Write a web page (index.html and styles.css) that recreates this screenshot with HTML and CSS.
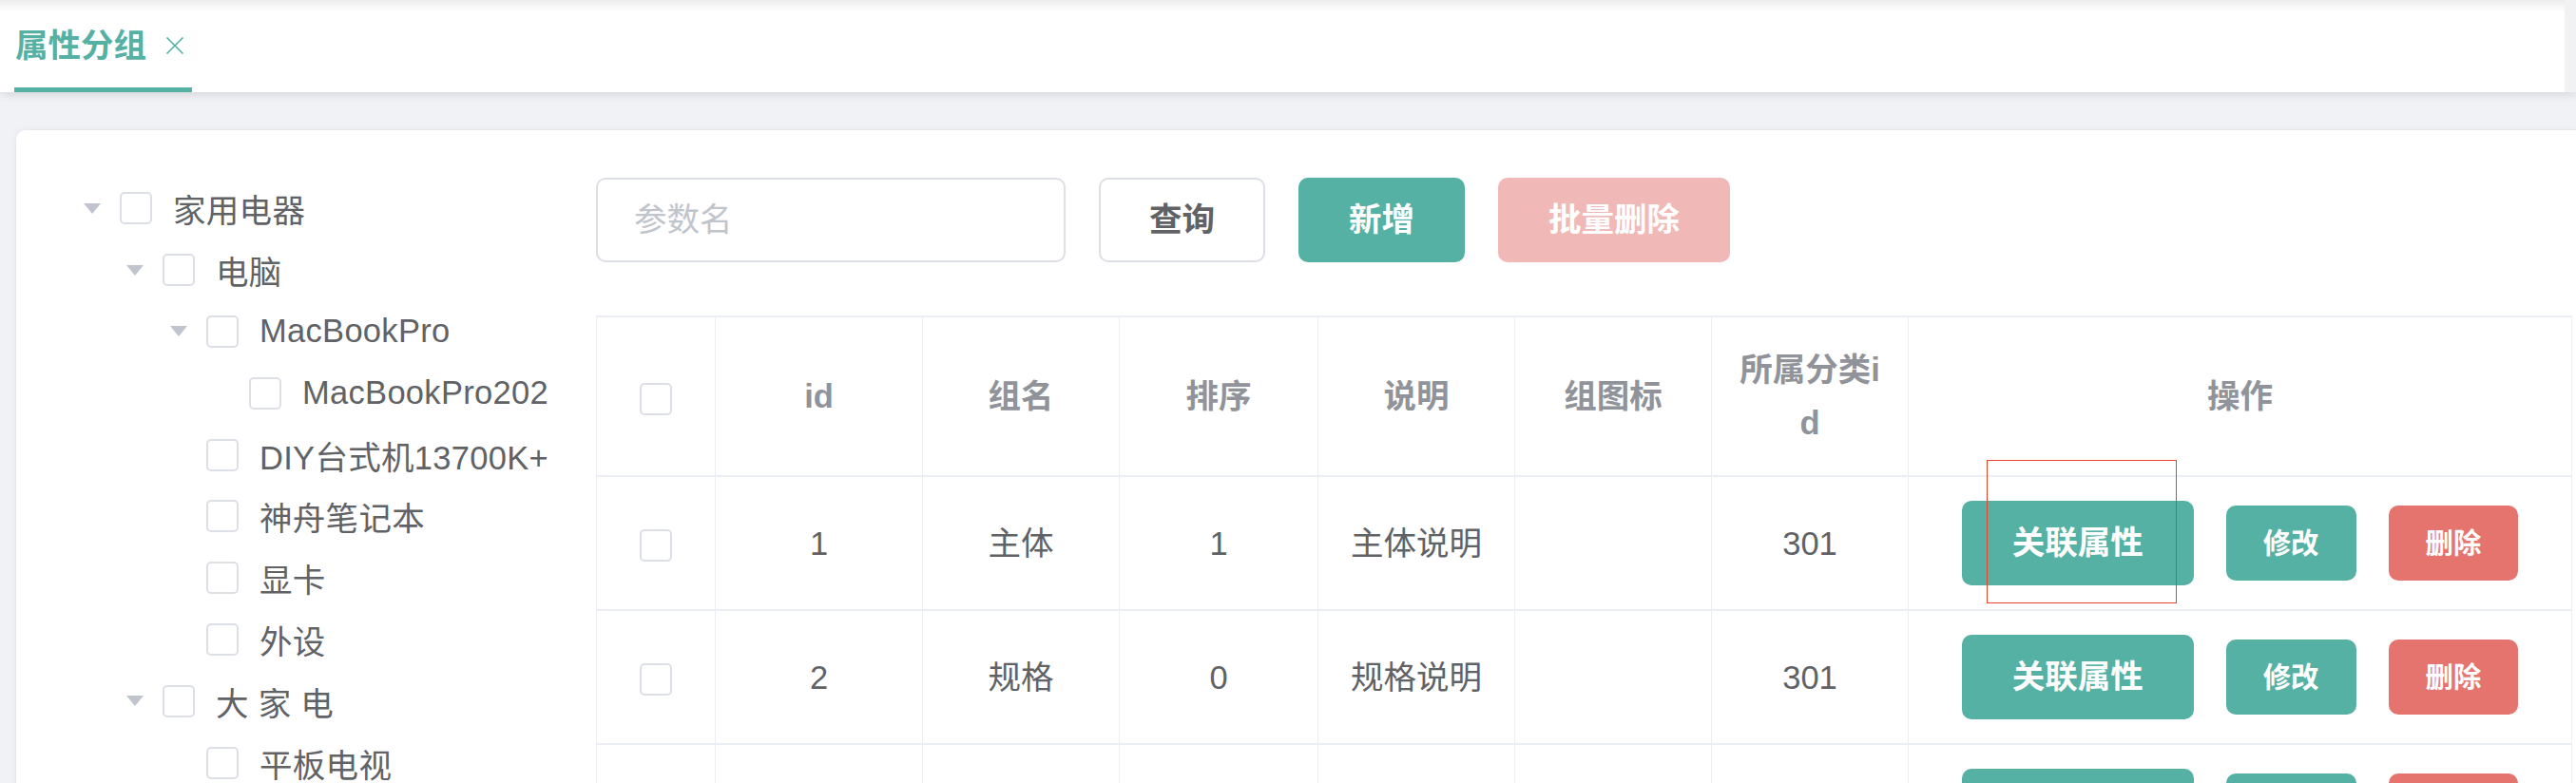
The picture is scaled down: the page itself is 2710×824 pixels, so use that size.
FILE: index.html
```html
<!DOCTYPE html>
<html lang="zh-CN">
<head>
<meta charset="utf-8">
<title>属性分组</title>
<link rel="stylesheet" href="styles.css">
</head>
<body>
<header class="tabbar">
  <div class="tabs">
    <div class="tab">
      <span class="tab-title">属性分组</span>
      <svg class="tab-close" viewBox="0 0 20 18" aria-hidden="true"><path d="M1.5 0.5 L18.5 17.5 M18.5 0.5 L1.5 17.5" stroke="#55b1a3" stroke-width="1.6" fill="none"/></svg>
    </div>
  </div>
  <div class="gutter"></div>
</header>

<main class="page">
  <section class="card">
    <aside class="tree-col">
      <ul class="tree">
        <li class="node lv1"><span class="arrow"></span><span class="cb"></span><span class="label">家用电器</span></li>
        <li class="node lv2"><span class="arrow"></span><span class="cb"></span><span class="label">电脑</span></li>
        <li class="node lv3"><span class="arrow"></span><span class="cb"></span><span class="label">MacBookPro</span></li>
        <li class="node lv4"><span class="arrow leaf"></span><span class="cb"></span><span class="label">MacBookPro2023</span></li>
        <li class="node lv3"><span class="arrow leaf"></span><span class="cb"></span><span class="label">DIY台式机13700K+3080Ti</span></li>
        <li class="node lv3"><span class="arrow leaf"></span><span class="cb"></span><span class="label">神舟笔记本</span></li>
        <li class="node lv3"><span class="arrow leaf"></span><span class="cb"></span><span class="label">显卡</span></li>
        <li class="node lv3"><span class="arrow leaf"></span><span class="cb"></span><span class="label">外设</span></li>
        <li class="node lv2"><span class="arrow"></span><span class="cb"></span><span class="label">大 家 电</span></li>
        <li class="node lv3"><span class="arrow leaf"></span><span class="cb"></span><span class="label">平板电视</span></li>
      </ul>
    </aside>

    <div class="main-col">
      <div class="toolbar">
        <input class="search" type="text" placeholder="参数名">
        <button class="btn btn-plain">查询</button>
        <button class="btn btn-primary">新增</button>
        <button class="btn btn-danger-disabled">批量删除</button>
      </div>

      <table class="grid">
        <colgroup>
          <col class="c-sel"><col class="c-id"><col class="c-name"><col class="c-sort"><col class="c-desc"><col class="c-icon"><col class="c-cat"><col>
        </colgroup>
        <thead>
          <tr>
            <th><span class="cb"></span></th>
            <th>id</th>
            <th>组名</th>
            <th>排序</th>
            <th>说明</th>
            <th>组图标</th>
            <th>所属分类id</th>
            <th>操作</th>
          </tr>
        </thead>
        <tbody>
          <tr>
            <td><span class="cb"></span></td>
            <td>1</td>
            <td>主体</td>
            <td>1</td>
            <td>主体说明</td>
            <td></td>
            <td>301</td>
            <td><div class="ops"><button class="btn btn-primary">关联属性</button><button class="btn btn-sm btn-primary">修改</button><button class="btn btn-sm btn-danger">删除</button></div></td>
          </tr>
          <tr>
            <td><span class="cb"></span></td>
            <td>2</td>
            <td>规格</td>
            <td>0</td>
            <td>规格说明</td>
            <td></td>
            <td>301</td>
            <td><div class="ops"><button class="btn btn-primary">关联属性</button><button class="btn btn-sm btn-primary">修改</button><button class="btn btn-sm btn-danger">删除</button></div></td>
          </tr>
          <tr>
            <td><span class="cb"></span></td>
            <td>3</td>
            <td>屏幕</td>
            <td>2</td>
            <td>屏幕说明</td>
            <td></td>
            <td>301</td>
            <td><div class="ops"><button class="btn btn-primary">关联属性</button><button class="btn btn-sm btn-primary">修改</button><button class="btn btn-sm btn-danger">删除</button></div></td>
          </tr>
        </tbody>
      </table>
    </div>
  </section>
</main>

<div class="inspect-box"></div>
</body>
</html>
```

FILE: styles.css
```css
* {
  box-sizing: border-box;
  margin: 0;
  padding: 0;
}

html,
body {
  width: 2710px;
  height: 824px;
  overflow: hidden;
}

body {
  position: relative;
  background: #f0f2f5;
  font-family: "Liberation Sans", "Noto Sans CJK SC", sans-serif;
  font-size: 34.5px;
  color: #606266;
}

/* ---------- tab bar ---------- */
.tabbar {
  position: relative;
  z-index: 1;
  display: flex;
  height: 97px;
  background: linear-gradient(#ececec 0, #f8f8f8 7px, #ffffff 14px);
  box-shadow: 0 2px 10px rgba(0, 0, 0, 0.13);
}

.tabs {
  flex: 1;
  display: flex;
  padding-left: 15px;
}

.tab {
  display: flex;
  align-items: center;
  height: 97px;
  padding: 4px 8px 0 1px;
  border-bottom: 5px solid #55b1a3;
  color: #55b1a3;
  font-weight: 600;
}

.tab-title {
  line-height: 1;
}

.tab-close {
  width: 20px;
  height: 18px;
  margin-left: 20px;
}

.gutter {
  width: 12px;
  background: #f1f2f4;
}

/* ---------- page / card ---------- */
.page {
  padding: 39px 0 0 16px;
}

.card {
  display: flex;
  min-height: 900px;
  padding-top: 50px;
  background: #fff;
  border: 1px solid #e7e8ef;
  border-right: 0;
  border-radius: 10px 0 0 0;
  box-shadow: 0 0 6px rgba(0, 0, 0, 0.04);
}

/* ---------- tree ---------- */
.tree-col {
  flex: none;
  width: 561px;
  overflow: hidden;
}

.tree {
  list-style: none;
}

.node {
  display: flex;
  align-items: center;
  height: 64.8px;
  white-space: nowrap;
}

.lv1 { padding-left: 71px; }
.lv2 { padding-left: 116px; }
.lv3 { padding-left: 162px; }
.lv4 { padding-left: 207px; }

.arrow {
  flex: none;
  width: 0;
  height: 0;
  margin-right: 20px;
  border-left: 9.5px solid transparent;
  border-right: 9.5px solid transparent;
  border-top: 11px solid #c0c4cc;
}

.arrow.leaf {
  border-top-color: transparent;
}

.cb {
  flex: none;
  display: inline-block;
  width: 34px;
  height: 34px;
  border: 2px solid #dcdfe6;
  border-radius: 5px;
  background: #fff;
  vertical-align: middle;
}

.label {
  margin-left: 22px;
  letter-spacing: 0.3px;
}

/* ---------- main column ---------- */
.main-col {
  flex: 1;
  min-width: 0;
  margin-left: 49px;
  padding-right: 4px;
}

.toolbar {
  display: flex;
  gap: 35px;
  height: 89px;
}

.search {
  width: 494px;
  height: 89px;
  padding: 0 38px;
  border: 2px solid #dcdfe6;
  border-radius: 10px;
  font: inherit;
  color: #606266;
  outline: none;
}

.search::placeholder {
  color: #c0c4cc;
}

.btn {
  flex: none;
  height: 89px;
  padding: 0 51px;
  border: 2px solid transparent;
  border-radius: 10px;
  font: inherit;
  font-weight: 600;
  color: #fff;
  line-height: 1;
  white-space: nowrap;
}

.btn-plain {
  background: #fff;
  border-color: #dcdfe6;
  color: #606266;
}

.btn-primary {
  background: #55b1a3;
  border-color: #55b1a3;
}

.btn-danger {
  background: #e5746f;
  border-color: #e5746f;
}

.btn-danger-disabled {
  background: #f0b8b6;
  border-color: #f0b8b6;
}

.btn-sm {
  height: 79px;
  padding: 0 37px;
  font-size: 29.4px;
}

/* ---------- table ---------- */
.grid {
  width: 100%;
  margin-top: 56px;
  table-layout: fixed;
  border-collapse: collapse;
  border-top: 2px solid #ebeef5;
  border-left: 1px solid #ebeef5;
}

.c-sel { width: 125px; }
.c-id { width: 218px; }
.c-name { width: 207px; }
.c-sort { width: 209px; }
.c-desc { width: 207px; }
.c-icon { width: 207px; }
.c-cat { width: 207px; }

.grid th,
.grid td {
  padding: 0 24px;
  border-right: 1px solid #ebeef5;
  border-bottom: 2px solid #ebeef5;
  text-align: center;
  vertical-align: middle;
  line-height: 56px;
  word-break: break-all;
}

.grid th {
  height: 168px;
  color: #909399;
  font-weight: 700;
}

.grid td {
  height: 141px;
}

.ops {
  display: flex;
  justify-content: center;
  align-items: center;
  gap: 34px;
}

/* dev-tools style highlight drawn over the first button */
.inspect-box {
  position: absolute;
  left: 2090px;
  top: 484px;
  width: 200px;
  height: 151px;
  border: 1px solid #e8432b;
  pointer-events: none;
}
```
